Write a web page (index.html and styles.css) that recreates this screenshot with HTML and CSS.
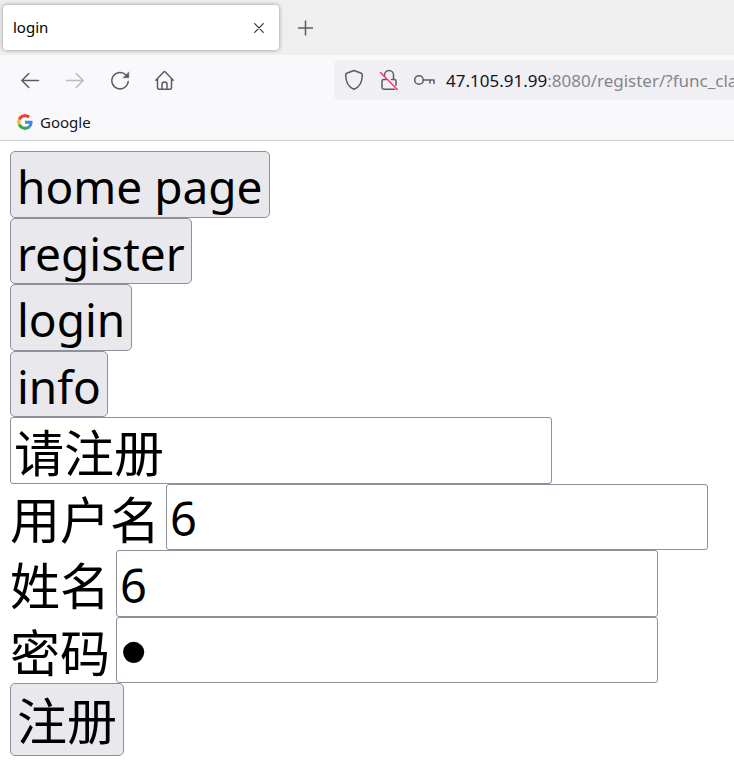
FILE: index.html
```html
<!DOCTYPE html>
<html lang="zh-CN">
<head>
<meta charset="utf-8">
<meta name="viewport" content="width=device-width, initial-scale=1">
<title>login</title>
<link rel="stylesheet" href="styles.css">
</head>
<body>
<header class="browser">
  <div class="tabs">
    <div class="tab">
      <span class="tab-title">login</span>
      <button class="tab-close" type="button" aria-label="Close tab">
        <svg width="10" height="10" viewBox="0 0 10 10"><path d="M.7.7l8.6 8.6M9.3.7L.7 9.3"/></svg>
      </button>
    </div>
    <button class="tab-new" type="button" aria-label="New tab">
      <svg width="16" height="16" viewBox="0 0 16 16"><path d="M8.500 1v14M1.500 8h14"/></svg>
    </button>
  </div>
  <div class="toolbar">
    <nav class="nav">
      <button class="tool" type="button" aria-label="Back">
        <svg width="20" height="20" viewBox="0 0 20 20"><path d="M18.5 10.500H1.8M8.800 3.500L1.8 10.500 8.800 17.500"/></svg>
      </button>
      <button class="tool" type="button" aria-label="Forward" disabled>
        <svg width="20" height="20" viewBox="0 0 20 20"><path d="M1.5 10.500h16.7M11.200 3.500l7 7-7 7"/></svg>
      </button>
      <button class="tool" type="button" aria-label="Reload">
        <svg width="20" height="20" viewBox="0 0 20 20"><path d="M18.2 11.500A8.2 8.2 0 1 1 16 5"/><path class="solid" d="M18.8 2.200v5.600h-5.600z"/></svg>
      </button>
      <button class="tool" type="button" aria-label="Home">
        <svg width="20" height="20" viewBox="0 0 20 20"><path d="M.8 10.300l7.900-8.300q.8-.9 1.600 0l7.900 8.300M2.500 9v8.500q0 1.800 1.800 1.800h10.400q1.800 0 1.800-1.800V9M7 19.300v-5q0-2.300 2.500-2.300t2.500 2.300v5"/></svg>
      </button>
    </nav>
    <div class="address">
      <svg width="20" height="22" viewBox="0 0 20 22"><path d="M10 1.500l7.300 2.700q1 .4 1 1.500c0 7-2 12-8.300 14.600C3.700 17.700 1.700 12.700 1.700 5.700q0-1.100 1-1.500z"/></svg>
      <svg width="20" height="22" viewBox="0 0 20 22"><path d="M5.500 6.500V6a4.500 4.500 0 0 1 9 0v4M7.500 10.500H4.700Q3 10.500 3 12.200v6.300q0 1.700 1.700 1.700h11M12.500 10.500h2.800q1.700 0 1.700 1.700v4"/><path class="slash" d="M1.500 3.500l16.800 17"/></svg>
      <svg width="22" height="22" viewBox="0 0 22 22"><circle cx="5" cy="11" r="4.300"/><path d="M9.500 11h10.500V14.500M16 11v3"/></svg>
      <span class="url"><span class="host">47.105.91.99</span>:8080/register/?func_class=register</span>
    </div>
  </div>
  <div class="bookmarks">
    <a class="bookmark" href="#">
      <svg class="google" width="16" height="16" viewBox="0 0 48 48">
        <path fill="#ea4335" d="M24 9.500c3.540 0 6.710 1.220 9.210 3.600l6.850-6.850C35.900 2.380 30.470 0 24 0 14.620 0 6.510 5.380 2.560 13.220l7.980 6.190C12.430 13.720 17.740 9.500 24 9.500z"/>
        <path fill="#4285f4" d="M46.980 24.550c0-1.570-.15-3.090-.38-4.550H24v9.020h12.940c-.58 2.960-2.260 5.480-4.780 7.180l7.730 6c4.510-4.180 7.090-10.360 7.090-17.650z"/>
        <path fill="#fbbc05" d="M10.530 28.590a14.500 14.500 0 0 1 0-9.180l-7.980-6.190a24 24 0 0 0 0 21.560z"/>
        <path fill="#34a853" d="M24 48c6.480 0 11.930-2.130 15.890-5.810l-7.730-6c-2.150 1.450-4.920 2.300-8.160 2.300-6.260 0-11.570-4.220-13.470-9.910l-7.980 6.190C6.510 42.620 14.620 48 24 48z"/>
      </svg>
      Google
    </a>
  </div>
</header>
<main class="page">
  <div class="row"><button class="action" type="button">home page</button></div>
  <div class="row"><button class="action" type="button">register</button></div>
  <div class="row"><button class="action" type="button">login</button></div>
  <div class="row"><button class="action" type="button">info</button></div>
  <form class="form">
    <div class="row"><input class="field hint" type="text" value="请注册" aria-label="提示"></div>
    <div class="row"><label for="username">用户名</label><input class="field" id="username" type="text" value="6"></div>
    <div class="row"><label for="name">姓名</label><input class="field" id="name" type="text" value="6"></div>
    <div class="row"><label for="password">密码</label><input class="field secret" id="password" type="password" value="6"></div>
    <button class="action submit" type="button">注册</button>
  </form>
</main>
</body>
</html>
```

FILE: styles.css
```css
* {
  box-sizing: border-box;
}

body {
  margin: 0;
  background: #fff;
  color: #000;
  font-family: "Noto Sans", "Noto Sans CJK SC", sans-serif;
  overflow-x: hidden;
}

button,
input {
  margin: 0;
  font-family: inherit;
  color: inherit;
}

svg {
  display: block;
  flex: none;
  fill: none;
  stroke: #5b5b66;
  stroke-width: 1.5;
  stroke-linecap: round;
  stroke-linejoin: round;
}

.browser {
  background: #f9f9fb;
  border-bottom: 1px solid #ccc;
  font-size: 15px;
}

.tabs {
  display: flex;
  align-items: center;
  gap: 16px;
  height: 55px;
  padding: 0 3px;
  background: #efefef;
}

.tab {
  display: flex;
  align-items: center;
  justify-content: space-between;
  width: 276px;
  height: 45px;
  padding: 0 10px;
  background: #fff;
  border-radius: 4px;
  box-shadow: 0 0 4px rgba(0, 0, 0, 0.4);
}

.tab-title,
.bookmark {
  padding-bottom: 2px;
}

.tab-close,
.tab-new,
.tool {
  display: grid;
  place-items: center;
  flex: none;
  padding: 0;
  border: 0;
  background: none;
}

.tab-close {
  width: 20px;
  height: 20px;
}

.tab-close svg {
  stroke: #333;
  stroke-width: 1.2;
}

.tab-new {
  width: 20px;
  height: 20px;
}

.toolbar {
  display: flex;
  align-items: center;
  height: 50px;
}

.nav {
  display: flex;
  flex: none;
  gap: 5px;
  width: 334px;
  padding-left: 10px;
}

.tool {
  width: 40px;
  height: 40px;
}

.tool:disabled {
  opacity: 0.4;
}

.solid {
  fill: #5b5b66;
  stroke-width: 0.5;
}

.address {
  display: flex;
  flex: 1;
  align-items: center;
  gap: 15px;
  min-width: 0;
  height: 40px;
  padding-left: 10px;
  background: #f0f0f4;
  border-radius: 5px 0 0 5px;
  overflow: hidden;
}

.slash {
  stroke: #ff3366;
}

.url {
  margin-left: -5px;
  color: #85858c;
  font-size: 17px;
  white-space: nowrap;
}

.host {
  color: #15141a;
}

.bookmarks {
  display: flex;
  align-items: center;
  height: 35px;
  padding-left: 17px;
}

.bookmark {
  display: flex;
  align-items: center;
  gap: 7px;
  color: #15141a;
  text-decoration: none;
}

.google {
  stroke: none;
  border-radius: 50%;
  background: #fff;
}

.page {
  padding: 10px;
  font-size: 50px;
  line-height: 60px;
}

.row {
  display: flex;
  align-items: stretch;
  gap: 6px;
  height: 66px;
}

.row:nth-child(odd) {
  height: 67px;
}

.row label {
  flex: none;
  padding-top: 6px;
}

.action {
  padding: 3px 6px 0;
  border: 1px solid #8f8f9d;
  border-radius: 5px;
  background: #e9e9ed;
  font-size: 46px;
  line-height: 60px;
}

.submit {
  display: block;
  height: 73px;
  padding: 3px 6px 0;
  font-size: 50px;
}

.field {
  width: 542px;
  min-width: 0;
  padding: 2px 3px 0;
  border: 1px solid #8f8f9d;
  border-radius: 3px;
  background: #fff;
  font-size: 47px;
}

.hint {
  padding-top: 0;
  font-size: 50px;
}

.secret {
  font-family: "Liberation Sans", sans-serif;
  font-size: 78px;
}
```
